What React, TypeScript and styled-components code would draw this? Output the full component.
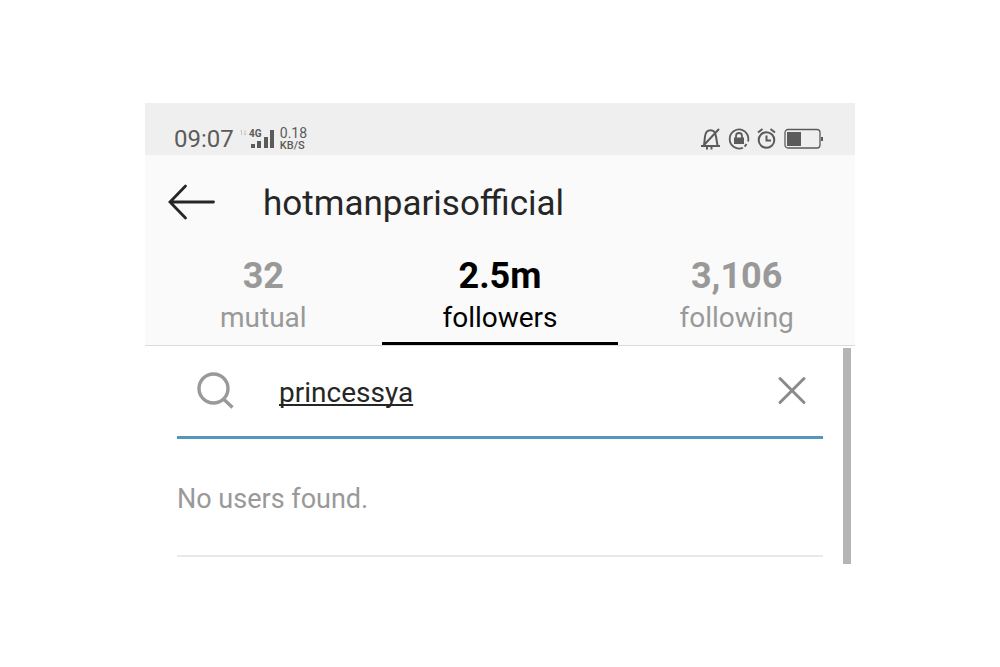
import React, { useState } from "react";
import styled, { createGlobalStyle } from "styled-components";

const GlobalStyle = createGlobalStyle`
  * { box-sizing: border-box; }
  body { margin: 0; background: #fff; font-family: Roboto, "Liberation Sans", sans-serif; }
  button, input { font: inherit; border: 0; padding: 0; background: none; }
`;

const Page = styled.div`
  display: flex;
  justify-content: center;
  padding: 103px 0;
`;

const Screen = styled.main`
  width: 71%;
`;

const StatusBar = styled.div`
  display: flex;
  justify-content: space-between;
  align-items: center;
  height: 52px;
  padding: 20px 31px 0 29px;
  background: #efefef;
  color: #5b5b5b;
`;

const StatusGroup = styled.div<{ $gap: number }>`
  display: flex;
  align-items: center;
  gap: ${(p) => p.$gap}px;
`;

const Clock = styled.time`
  font-size: 24px;
  line-height: 32px;
`;

const Speed = styled.div`
  display: flex;
  flex-direction: column;
  font-size: 14px;
  line-height: 13px;
`;

const SpeedUnit = styled.span`
  font-size: 11px;
  font-weight: 500;
  line-height: 11px;
`;

const Header = styled.header`
  background: #fafafa;
  border-bottom: 1px solid #dcdcdc;
`;

const TitleRow = styled.div`
  display: flex;
  align-items: center;
  gap: 48px;
  height: 96px;
  padding: 0 22px;
`;

const IconButton = styled.button`
  display: flex;
  cursor: pointer;
`;

const Title = styled.h1`
  margin: 0;
  padding-top: 2px;
  font-size: 35px;
  line-height: 48px;
  font-weight: 400;
  color: #262626;
`;

const Tabs = styled.div`
  display: grid;
  grid-template-columns: repeat(3, 1fr);
  height: 94px;
`;

const Tab = styled.button<{ $active: boolean }>`
  display: flex;
  flex-direction: column;
  align-items: center;
  justify-content: flex-end;
  padding-bottom: 6px;
  border-bottom: 3px solid ${(p) => (p.$active ? "#000" : "transparent")};
  color: ${(p) => (p.$active ? "#000" : "#999")};
  cursor: pointer;
`;

const Count = styled.span`
  font-size: 36px;
  line-height: 48px;
  font-weight: 700;
`;

const Label = styled.span`
  font-size: 28px;
  line-height: 36px;
`;

const Body = styled.div`
  display: flex;
  padding: 0 4px 0 32px;
`;

const Results = styled.section`
  flex: 1;
  min-width: 0;
  padding-bottom: 7px;
`;

const SearchRow = styled.label`
  display: flex;
  align-items: center;
  height: 93px;
  padding: 0 16px 0 18px;
  border-bottom: 3px solid #5596bf;
`;

const SearchInput = styled.input`
  flex: 1;
  min-width: 0;
  margin: 0 24px 0 42px;
  padding-top: 4px;
  font-size: 28px;
  line-height: 36px;
  color: #262626;
  outline: none;
  text-decoration: underline;
  text-decoration-thickness: 2px;
  text-underline-offset: 2px;
  text-decoration-skip-ink: none;
`;

const Message = styled.p`
  margin: 0;
  padding: 42px 0 38px;
  font-size: 27px;
  line-height: 36px;
  color: #999;
  border-bottom: 2px solid #e9e9e9;
`;

const Scrollbar = styled.div`
  width: 8px;
  margin: 2px 0 0 20px;
  background: #b5b5b5;
`;

const SignalIcon = () => (
  <svg width="34" height="24" viewBox="0 0 34 24" fill="#5b5b5b" aria-hidden="true">
    <path d="M1.500 3v5M5 3v5M0 4.500l1.500-1.500M3.700 6.500l1.300 1.500 1.300-1.500" fill="none" stroke="#c9c9c9" />
    <text x="9" y="10" fontSize="10" fontWeight="700">4G</text>
    <path d="M11 17h4v4h-4zM17 14h4v7h-4zM24 10h4v11h-4zM30 3h4v18h-4z" />
  </svg>
);

const MutedBellIcon = () => (
  <svg width="20" height="24" viewBox="0 0 20 24" fill="none" stroke="#5b5b5b" strokeWidth="2" aria-hidden="true">
    <path d="M0 19h19M3 18.500L4 9.500C4.500 5 6.500 3.200 9.500 3.200S14.500 5 15 9.500l1.500 9M18 2L2.500 18.500M6 20v2.500M10.500 20v2.500" />
  </svg>
);

const RotationLockIcon = () => (
  <svg width="22" height="24" viewBox="0 0 22 24" fill="none" stroke="#5b5b5b" strokeWidth="1.800" aria-hidden="true">
    <path d="M15 3.300A9.500 9.500 0 1 0 15 20.700M14 2.900A9.500 9.500 0 0 1 20 14.500M18.500 17a9.500 9.500 0 0 1-2 2.500" />
    <path d="M8 11V9a3 3 0 0 1 6 0v2" />
    <path d="M6 10.500h10v6.500h-10z" fill="#5b5b5b" stroke="none" />
  </svg>
);

const AlarmIcon = () => (
  <svg width="20" height="24" viewBox="0 0 20 24" fill="none" stroke="#5b5b5b" strokeWidth="2" aria-hidden="true">
    <circle cx="9.500" cy="13" r="7.800" />
    <path d="M9.500 8.500v5H14M1 5.500L5.500 2M18 5.500L13.500 2" />
  </svg>
);

const BatteryIcon = () => (
  <svg width="40" height="24" viewBox="0 0 40 24" fill="none" aria-hidden="true">
    <rect x="1" y="2.500" width="35" height="18.500" rx="3" stroke="#5b5b5b" strokeWidth="1.300" />
    <path d="M3 5h14v14H3zM37 10h2v4h-2z" fill="#5b5b5b" />
  </svg>
);

const BackIcon = () => (
  <svg width="48" height="40" viewBox="0 0 48 40" fill="none" stroke="#262626" strokeWidth="2.800" strokeLinecap="round" aria-hidden="true">
    <path d="M46.500 19H3M18.500 3L3 19l15.500 16" />
  </svg>
);

const SearchIcon = () => (
  <svg width="42" height="42" viewBox="0 0 42 42" fill="none" stroke="#999" strokeWidth="3.400" aria-hidden="true">
    <circle cx="18.500" cy="18.500" r="14.500" />
    <path d="M28 28.500l9.500 9" />
  </svg>
);

const ClearIcon = () => (
  <svg width="30" height="30" viewBox="0 0 30 30" fill="none" stroke="#8a8a8a" strokeWidth="3" strokeLinecap="round" aria-hidden="true">
    <path d="M3 2.500l24 24M27 2.500L3 26.500" />
  </svg>
);

const tabs = [
  { count: "32", label: "mutual" },
  { count: "2.5m", label: "followers" },
  { count: "3,106", label: "following" },
];

export default function App() {
  const [active, setActive] = useState("followers");
  const [query, setQuery] = useState("princessya");

  return (
    <Page>
      <GlobalStyle />
      <Screen>
        <StatusBar>
          <StatusGroup $gap={6}>
            <Clock>09:07</Clock>
            <SignalIcon />
            <Speed>
              <span>0.18</span>
              <SpeedUnit>KB/S</SpeedUnit>
            </Speed>
          </StatusGroup>
          <StatusGroup $gap={7}>
            <MutedBellIcon />
            <RotationLockIcon />
            <AlarmIcon />
            <BatteryIcon />
          </StatusGroup>
        </StatusBar>
        <Header>
          <TitleRow>
            <IconButton aria-label="Back">
              <BackIcon />
            </IconButton>
            <Title>hotmanparisofficial</Title>
          </TitleRow>
          <Tabs role="tablist">
            {tabs.map((t) => (
              <Tab
                key={t.label}
                role="tab"
                aria-selected={t.label === active}
                $active={t.label === active}
                onClick={() => setActive(t.label)}
              >
                <Count>{t.count}</Count>
                <Label>{t.label}</Label>
              </Tab>
            ))}
          </Tabs>
        </Header>
        <Body>
          <Results>
            <SearchRow>
              <SearchIcon />
              <SearchInput
                type="text"
                aria-label="Search"
                value={query}
                onChange={(e) => setQuery(e.target.value)}
              />
              <IconButton type="button" aria-label="Clear search" onClick={() => setQuery("")}>
                <ClearIcon />
              </IconButton>
            </SearchRow>
            <Message>No users found.</Message>
          </Results>
          <Scrollbar />
        </Body>
      </Screen>
    </Page>
  );
}
